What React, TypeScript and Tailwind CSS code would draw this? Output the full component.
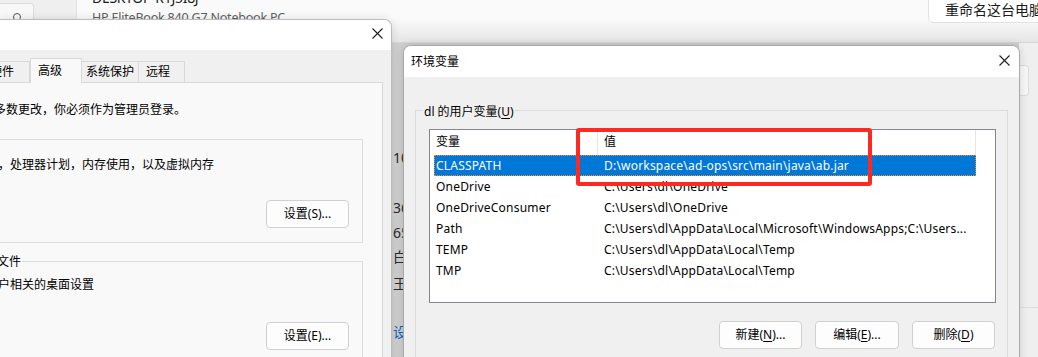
import React from "react";

const font = "font-['Noto_Sans','Noto_Sans_CJK_SC',sans-serif]";

function XIcon({ className = "" }: { className?: string }) {
  return (
    <svg width="11" height="11" viewBox="0 0 11 11" className={`block ${className}`}>
      <path d="M0.5 0.5L10.5 10.5M10.5 0.5L0.5 10.5" stroke="#1f1f1f" strokeWidth="1.1" fill="none" />
    </svg>
  );
}

function WinButton({ children, className = "" }: { children: React.ReactNode; className?: string }) {
  return (
    <div
      className={`flex h-[28px] items-center justify-center rounded-[4px] border border-[#d0d0d0] bg-[#fdfdfd] text-[12px] leading-[16px] text-black ${className}`}
    >
      {children}
    </div>
  );
}

const rows: [string, string][] = [
  ["CLASSPATH", "D:\\workspace\\ad-ops\\src\\main\\java\\ab.jar"],
  ["OneDrive", "C:\\Users\\dl\\OneDrive"],
  ["OneDriveConsumer", "C:\\Users\\dl\\OneDrive"],
  ["Path", "C:\\Users\\dl\\AppData\\Local\\Microsoft\\WindowsApps;C:\\Users..."],
  ["TEMP", "C:\\Users\\dl\\AppData\\Local\\Temp"],
  ["TMP", "C:\\Users\\dl\\AppData\\Local\\Temp"],
];

function SettingsBackdrop() {
  return (
    <div className="absolute inset-0 flex">
      {/* nav column */}
      <div className="w-[77px] shrink-0 border-r border-[#e3e3e3] bg-[#efefef]">
        <div className="mt-[3px] flex h-[40px] w-[34px] justify-center rounded-tr-[4px] border border-l-0 border-[#dedede] bg-[#f8f8f8] pt-[9px]">
          <div className="h-[8px] w-[8px] rounded-full border border-[#555]" />
        </div>
      </div>
      {/* main area */}
      <div className="flex min-w-0 flex-1 flex-col">
        <div className="flex h-[43px] shrink-0 border-b border-[#d6d6d6] bg-linear-to-b from-[#fafafa] from-45% to-[#e5e5e5]">
          <div className="ml-[15px] mt-[-11px] flex flex-col text-[#1b1b1b]">
            <div className="text-[14px] leading-[18px] tracking-[-0.3px]">DESKTOP-R1J5I8J</div>
            <div className="mt-[3px] text-[12.5px] leading-[16px] tracking-[-0.2px] text-[#5f5f5f]">HP EliteBook 840 G7 Notebook PC</div>
          </div>
          <div className="ml-auto mr-[-14px] mt-[-6px] flex h-[29px] w-[124px] items-center rounded-[5px] border border-[#e2e2e2] bg-white pl-[16px] pt-[2px] text-[14px] whitespace-nowrap text-[#1b1b1b]">
            重命名这台电脑
          </div>
        </div>
        <div className="flex flex-1">
          <div className="w-[315px] shrink-0" />
          <div className="flex w-[627px] shrink-0 flex-col bg-[#cfcfcf] pl-[1px] text-[14px] leading-[20px] text-[#2a2a2a]">
            <div className="mt-[105px]">10</div>
            <div className="mt-[30px]">36</div>
            <div className="mt-[5px]">65</div>
            <div className="mt-[4px]">白</div>
            <div className="mt-[7px]">王</div>
            <div className="mt-[28px] text-[#0067c0]">设置</div>
          </div>
          <div className="flex flex-1 flex-col bg-[#efefef]">
            <div className="mt-[22px] h-[31px] w-[10px] rounded-r-[4px] border border-l-0 border-[#dcdcdc] bg-[#f7f7f7]" />
            <div className="mt-[211px] border-t border-[#dcdcdc]" />
          </div>
        </div>
      </div>
    </div>
  );
}

function SystemPropsDialog() {
  return (
    <div className="absolute left-0 top-[19px] h-[350px] w-[392px] overflow-hidden rounded-tr-[8px] border-r border-t border-[#bdbdbd] bg-[#f0f0f0] shadow-[0_0_8px_rgba(0,0,0,0.12)]">
      <div className="flex h-[30px] items-center justify-end bg-white pr-[8px]">
        <XIcon className="mb-[3px]" />
      </div>
      <div className="pt-[8px] text-[12px] leading-[16px] text-black">
        <div className="relative z-10 flex h-[24px] items-end">
          <div className="ml-[-14px] h-[21px] w-[44px] border border-b-0 border-[#d9d9d9] bg-[#f0f0f0] pl-[3px] leading-[20px] whitespace-nowrap">
            硬件
          </div>
          <div className="mb-[-1px] h-[25px] w-[52px] border border-b-0 border-[#d9d9d9] bg-[#f9f9f9] pl-[7px] pt-[4px]">
            高级
          </div>
          <div className="ml-[-1px] h-[21px] w-[58px] border border-b-0 border-[#d9d9d9] bg-[#f0f0f0] pl-[4px] leading-[20px] whitespace-nowrap">
            系统保护
          </div>
          <div className="ml-[-1px] h-[21px] w-[47px] border border-b-0 border-[#d9d9d9] bg-[#f0f0f0] pl-[7px] leading-[20px]">
            远程
          </div>
        </div>
        <div className="ml-[-68px] h-[300px] w-[451px] border border-[#d9d9d9] bg-[#f9f9f9] pl-[7px] pt-[19px]">
          <div className="pl-[6px] whitespace-nowrap">要进行大多数更改，你必须作为管理员登录。</div>
          <div className="relative mt-[21px] flex h-[104px] w-[423px] flex-col border border-[#dcdcdc] pl-[9px] pr-[13px]">
            <div className="absolute left-[7px] top-[-8px] bg-[#f9f9f9] px-[1px]">性能</div>
            <div className="mt-[17px] whitespace-nowrap">视觉效果，处理器计划，内存使用，以及虚拟内存</div>
            <WinButton className="mt-[27px] w-[83px] self-end">设置(S)...</WinButton>
          </div>
          <div className="relative mt-[18px] flex h-[110px] w-[423px] flex-col border border-[#dcdcdc] pl-[9px] pr-[13px]">
            <div className="absolute left-[7px] top-[-8px] bg-[#f9f9f9] px-[1px]">用户配置文件</div>
            <div className="mt-[15px] whitespace-nowrap">与登录帐户相关的桌面设置</div>
            <WinButton className="mt-[29px] w-[83px] self-end">设置(E)...</WinButton>
          </div>
        </div>
      </div>
    </div>
  );
}

function EnvDialog() {
  return (
    <div className="absolute left-[403px] top-[45px] h-[330px] w-[617px] overflow-hidden rounded-t-[8px] border border-[#a9a9a9] bg-[#f0f0f0] text-[12px] leading-[16px] text-black shadow-[0_0_8px_rgba(0,0,0,0.15)]">
      <div className="flex h-[31px] items-center justify-between bg-white pl-[7px] pr-[9px]">
        <span>环境变量</span>
        <XIcon className="mb-[2px]" />
      </div>
      <div className="pl-[11px] pt-[33px]">
        <div className="relative h-[270px] w-[593px] border border-[#dcdcdc]">
          <div className="absolute left-[7px] top-[-7px] bg-[#f0f0f0] px-[1px]">
            dl 的用户变量(<span className="underline underline-offset-2">U</span>)
          </div>
          <div className="ml-[13px] mt-[18px] h-[174px] w-[567px] border border-[#828790] bg-white">
            <div className="flex h-[25px] items-center">
              <div className="h-full w-[168px] border-r border-[#e5e5e5] pl-[6px] leading-[24px]">变量</div>
              <div className="h-full w-[378px] border-r border-[#e5e5e5] pl-[6px] leading-[24px]">值</div>
            </div>
            {rows.map(([k, v], i) => (
              <div
                key={k}
                className={`ml-[4px] flex h-[21px] w-[542px] items-center whitespace-nowrap tracking-[0.2px] ${
                  i === 0
                    ? "bg-[#0078d7] text-white outline-1 -outline-offset-1 outline-dotted outline-[#ff8728]"
                    : ""
                }`}
              >
                <div className="w-[163px] shrink-0 pl-[2px]">{k}</div>
                <div className="min-w-0 flex-1 overflow-hidden pl-[7px]">{v}</div>
              </div>
            ))}
          </div>
          <div className="mt-[18px] flex justify-end gap-[13px] pr-[12px]">
            <WinButton className="w-[83px]">
              新建(<span className="underline underline-offset-2">N</span>)...
            </WinButton>
            <WinButton className="w-[84px]">
              编辑(<span className="underline underline-offset-2">E</span>)...
            </WinButton>
            <WinButton className="w-[83px]">
              删除(<span className="underline underline-offset-2">D</span>)
            </WinButton>
          </div>
        </div>
      </div>
    </div>
  );
}

export default function App() {
  return (
    <div className={`relative h-[357px] w-[1038px] overflow-hidden bg-[#f0f0f0] ${font}`}>
      <SettingsBackdrop />
      <SystemPropsDialog />
      <EnvDialog />
      <div className="pointer-events-none absolute left-[576px] top-[128px] h-[58px] w-[296px] rounded-[3px] border-[4px] border-[#fe2a21]" />
    </div>
  );
}
